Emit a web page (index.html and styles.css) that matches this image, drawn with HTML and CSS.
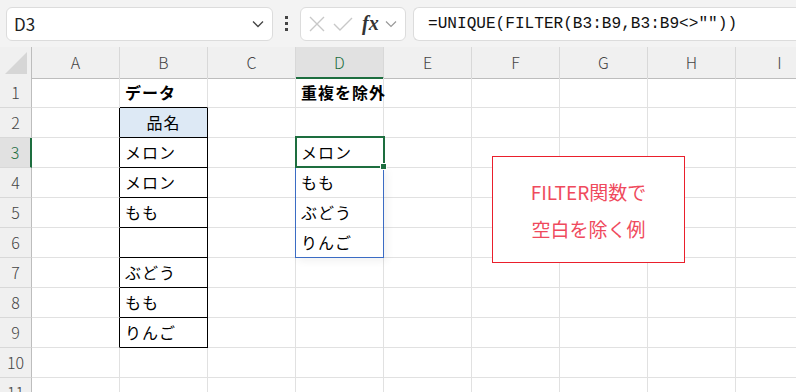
FILE: index.html
```html
<!DOCTYPE html>
<html lang="ja">
<head>
  <meta charset="UTF-8" />
  <title>UNIQUE FILTER</title>
  <link rel="stylesheet" href="styles.css">
</head>
<body>

<div class="toolbar">
  <div class="namebox">
    <span>D3</span>
    <svg class="chev" width="12" height="8" viewBox="0 0 12 8"><path d="M1 1.5 L6 6.5 L11 1.5" fill="none" stroke="#444" stroke-width="1.3"/></svg>
  </div>
  <div class="dots"><i></i><i></i><i></i></div>
  <div class="fxbox">
    <svg width="18" height="18" viewBox="0 0 18 18"><path d="M2 2 L16 16 M16 2 L2 16" stroke="#c8c8c8" stroke-width="1.4"/></svg>
    <svg width="22" height="18" viewBox="0 0 22 18"><path d="M2 9 L8 15 L20 3" fill="none" stroke="#c8c8c8" stroke-width="1.4"/></svg>
    <span class="fx">fx</span>
    <svg width="12" height="8" viewBox="0 0 12 8"><path d="M1 1.5 L6 6.5 L11 1.5" fill="none" stroke="#999" stroke-width="1.2"/></svg>
  </div>
  <div class="formula">=UNIQUE(FILTER(B3:B9,B3:B9&lt;&gt;""))</div>
</div>

<div class="sheet">
  <div class="row head">
    <div class="corner"><svg width="22" height="22" viewBox="0 0 22 22"><path d="M22 0 L22 22 L0 22 Z" fill="#d6d6d6"/></svg></div>
    <div class="ch">A</div><div class="ch">B</div><div class="ch">C</div><div class="ch sel">D</div><div class="ch">E</div><div class="ch">F</div><div class="ch">G</div><div class="ch">H</div><div class="ch">I</div>
  </div>

  <div class="row">
    <div class="rh">1</div>
    <div class="c"></div><div class="c bold tb">データ</div><div class="c"></div><div class="c bold">重複を除外</div><div class="c"></div><div class="c"></div><div class="c"></div><div class="c"></div><div class="c"></div>
  </div>
  <div class="row">
    <div class="rh">2</div>
    <div class="c tl"></div><div class="c t title">品名</div><div class="c"></div><div class="c"></div><div class="c"></div><div class="c"></div><div class="c"></div><div class="c"></div><div class="c"></div>
  </div>
  <div class="row">
    <div class="rh cur">3</div>
    <div class="c tl"></div><div class="c t">メロン</div><div class="c"></div><div class="c">メロン</div><div class="c"></div><div class="c"></div><div class="c"></div><div class="c"></div><div class="c"></div>
  </div>
  <div class="row">
    <div class="rh">4</div>
    <div class="c tl"></div><div class="c t">メロン</div><div class="c"></div><div class="c">もも</div><div class="c"></div><div class="c"></div><div class="c"></div><div class="c"></div><div class="c"></div>
  </div>
  <div class="row">
    <div class="rh">5</div>
    <div class="c tl"></div><div class="c t">もも</div><div class="c"></div><div class="c">ぶどう</div><div class="c"></div><div class="c"></div><div class="c"></div><div class="c"></div><div class="c"></div>
  </div>
  <div class="row">
    <div class="rh">6</div>
    <div class="c tl"></div><div class="c t"></div><div class="c"></div><div class="c">りんご</div><div class="c"></div><div class="c"></div><div class="c"></div><div class="c"></div><div class="c"></div>
  </div>
  <div class="row">
    <div class="rh">7</div>
    <div class="c tl"></div><div class="c t">ぶどう</div><div class="c"></div><div class="c"></div><div class="c"></div><div class="c"></div><div class="c"></div><div class="c"></div><div class="c"></div>
  </div>
  <div class="row">
    <div class="rh">8</div>
    <div class="c tl"></div><div class="c t">もも</div><div class="c"></div><div class="c"></div><div class="c"></div><div class="c"></div><div class="c"></div><div class="c"></div><div class="c"></div>
  </div>
  <div class="row">
    <div class="rh">9</div>
    <div class="c tl"></div><div class="c t">りんご</div><div class="c"></div><div class="c"></div><div class="c"></div><div class="c"></div><div class="c"></div><div class="c"></div><div class="c"></div>
  </div>
  <div class="row">
    <div class="rh">10</div>
    <div class="c"></div><div class="c"></div><div class="c"></div><div class="c"></div><div class="c"></div><div class="c"></div><div class="c"></div><div class="c"></div><div class="c"></div>
  </div>
  <div class="row">
    <div class="rh">11</div>
    <div class="c"></div><div class="c"></div><div class="c"></div><div class="c"></div><div class="c"></div><div class="c"></div><div class="c"></div><div class="c"></div><div class="c"></div>
  </div>

  <div class="spill"></div>
  <div class="active"><span class="handle"></span></div>

  <div class="note">
    <p>FILTER関数で</p>
    <p>空白を除く例</p>
  </div>
</div>

</body>
</html>
```

FILE: styles.css
```css
body {
  margin: 0;
  width: 796px;
  height: 392px;
  overflow: hidden;
  background: #ffffff;
  font-family: "Noto Sans CJK JP", "Noto Sans", sans-serif;
  color: #000;
}

/* formula bar */
.toolbar {
  height: 47px;
  background: #f3f3f3;
  display: flex;
  align-items: center;
  padding-left: 6px;
  box-sizing: border-box;
}

.namebox {
  width: 267px;
  height: 34px;
  box-sizing: border-box;
  background: #fff;
  border: 1px solid #dcdcdc;
  border-radius: 6px;
  display: flex;
  align-items: center;
  justify-content: space-between;
  padding: 0 8px 0 7px;
  font-size: 17px;
  color: #222;
}

.dots {
  width: 27px;
  display: flex;
  flex-direction: column;
  align-items: center;
  gap: 3px;
}

.dots i {
  width: 3px;
  height: 3px;
  background: #444;
}

.fxbox {
  width: 106px;
  height: 34px;
  box-sizing: border-box;
  background: #fff;
  border: 1px solid #dcdcdc;
  border-radius: 6px;
  display: flex;
  align-items: center;
  gap: 6px;
  padding-left: 7px;
}

.fx {
  font-family: "Liberation Serif", serif;
  font-style: italic;
  font-weight: bold;
  font-size: 20px;
  color: #333;
  margin-left: 2px;
}

.formula {
  flex: 1;
  height: 34px;
  margin-left: 7px;
  box-sizing: border-box;
  background: #fff;
  border: 1px solid #dcdcdc;
  border-right: none;
  border-radius: 6px 0 0 6px;
  padding-left: 14px;
  line-height: 32px;
  font-family: "Liberation Mono", monospace;
  font-size: 16.1px;
  color: #111;
}

/* sheet */
.sheet {
  position: relative;
}

.row {
  display: grid;
  grid-template-columns: 32px repeat(9, 88px);
  height: 30px;
}

.row.head {
  height: 31px;
  background: #f0f0f0;
}

.corner {
  border-right: 1px solid #bdbdbd;
  border-bottom: 1px solid #bdbdbd;
  display: flex;
  align-items: flex-end;
  justify-content: flex-end;
  padding: 0 4px 4px 0;
}

.ch {
  border-right: 1px solid #d8d8d8;
  border-bottom: 1px solid #bdbdbd;
  text-align: center;
  line-height: 30px;
  font-size: 16px;
  font-weight: 300;
  color: #444;
}

.ch.sel {
  background: #e1e1e1;
  color: #1d6e3f;
  border-bottom: 2px solid #1d6e3f;
}

.rh {
  background: #f0f0f0;
  border-right: 1px solid #bdbdbd;
  border-bottom: 1px solid #d8d8d8;
  text-align: center;
  line-height: 29px;
  font-size: 16px;
  font-weight: 300;
  color: #444;
}

.rh.cur {
  background: #e1e1e1;
  color: #1d6e3f;
  border-right: 2px solid #1d6e3f;
}

.c {
  border-right: 1px solid #e1e1e1;
  border-bottom: 1px solid #e1e1e1;
  line-height: 29px;
  font-size: 16px;
  letter-spacing: 1px;
  padding-left: 5px;
  white-space: nowrap;
}

.c.bold {
  font-weight: bold;
}

/* table B2:B9 */
.c.tb {
  border-bottom-color: #000;
}

.c.tl {
  border-right-color: #000;
}

.c.t {
  border-right-color: #000;
  border-bottom-color: #000;
}

.c.title {
  background: #dde9f5;
  text-align: center;
  padding-left: 0;
}

/* selection overlays */
.spill {
  position: absolute;
  left: 295px;
  top: 120px;
  width: 89px;
  height: 91px;
  box-sizing: border-box;
  border: 1px solid #3b6cc4;
  box-shadow: 3px 3px 8px rgba(0,0,0,0.06);
}

.active {
  position: absolute;
  left: 295px;
  top: 89px;
  width: 90px;
  height: 32px;
  box-sizing: border-box;
  border: 2px solid #1d6e3f;
}

.handle {
  position: absolute;
  right: -4px;
  bottom: -4px;
  width: 5px;
  height: 5px;
  background: #1d6e3f;
  border: 1px solid #fff;
}

.note {
  position: absolute;
  left: 492px;
  top: 109px;
  width: 193px;
  height: 107px;
  box-sizing: border-box;
  border: 1px solid #ea1f2c;
  background: #fff;
  display: flex;
  flex-direction: column;
  justify-content: center;
  align-items: center;
  gap: 10px;
  color: #ef4a5d;
  font-size: 19px;
}

.note p {
  margin: 0;
  line-height: 27px;
}
```
